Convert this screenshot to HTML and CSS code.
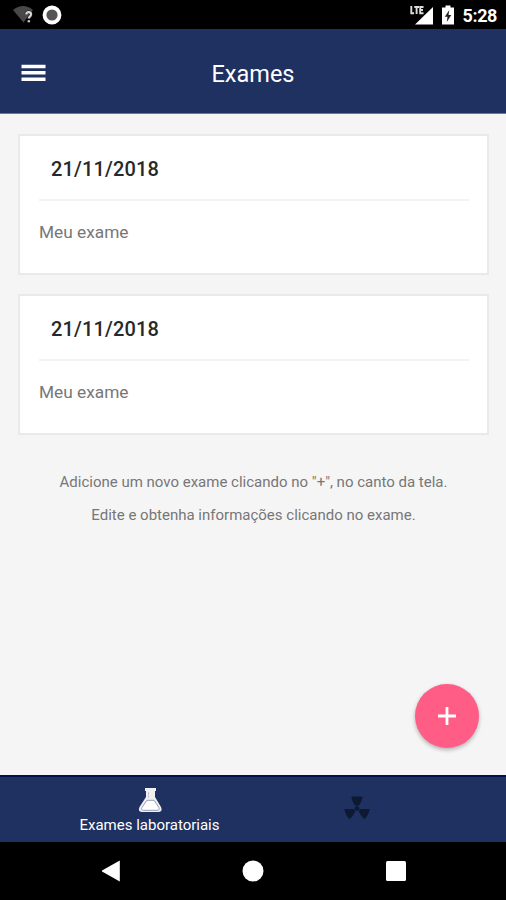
FILE: index.html
```html
<!DOCTYPE html>
<html lang="pt-BR">
  <head>
    <meta charset="UTF-8">
    <meta name="viewport" content="width=device-width, initial-scale=1.0">
    <title>Exames</title>
    <link rel="stylesheet" href="styles.css">
  </head>
  <body>
    <div class="status-bar">
      <div class="status-group">
        <svg class="wifi" width="22" height="20" viewBox="0 0 22 20">
          <path d="M0 5Q10 -3 20 5L10.500 17.500Z" fill="#484848" />
          <path d="M13.300 9.500Q13.300 7.200 15.600 7.200Q18 7.200 18 9.300Q18 10.700 16.800 11.700Q15.800 12.400 15.800 13.500M15.800 15.200V17.200" fill="none" stroke="#222" stroke-width="3.200" />
          <path d="M13.300 9.500Q13.300 7.200 15.600 7.200Q18 7.200 18 9.300Q18 10.700 16.800 11.700Q15.800 12.400 15.800 13.500M15.800 15.200V17.200" fill="none" stroke="#d5d5d5" stroke-width="2.200" />
        </svg>
        <svg width="20" height="20" viewBox="0 0 20 20">
          <circle cx="10" cy="10" r="7.500" fill="#555" stroke="#fff" stroke-width="3.800" />
        </svg>
      </div>
      <div class="status-group">
        <svg class="signal" width="24" height="20" viewBox="0 0 24 20">
          <path d="M23 2V19.500H5Z" fill="#fff" />
          <path d="M1.300 1V8.300H4M4.300 2H9M6.600 2V9M13.500 2H10.200V8.300H13.500M10.200 5H13" fill="none" stroke="#000" stroke-width="3" />
          <path d="M1.300 1V8.300H4M4.300 2H9M6.600 2V9M13.500 2H10.200V8.300H13.500M10.200 5H13" fill="none" stroke="#ddd" stroke-width="1.900" />
        </svg>
        <svg class="battery" width="12" height="20" viewBox="0 0 12 20">
          <path d="M3.500 0.500H8.500V2.500H12V19.500H0V2.500H3.500Z" fill="#fff" />
          <path d="M7.300 5L2.800 11.700H5.500L4.800 17L9.300 10H6.500Z" fill="#222" />
        </svg>
        <span class="clock">5:28</span>
      </div>
    </div>

    <header class="header">
      <button class="menu" aria-label="Menu">
        <svg width="25" height="18" viewBox="0 0 25 18">
          <path d="M0.500 2.500H24.500M0.500 8.800H24.500M0.500 15.200H24.500" stroke="#fff" stroke-width="3.400" />
        </svg>
      </button>
      <h1>Exames</h1>
    </header>

    <main class="content">
      <div class="card">
        <h2>21/11/2018</h2>
        <p>Meu exame</p>
      </div>
      <div class="card">
        <h2>21/11/2018</h2>
        <p>Meu exame</p>
      </div>
      <div class="hints">
        <p class="hint-add">Adicione um novo exame clicando no "+", no canto da tela.</p>
        <p class="hint-edit">Edite e obtenha informações clicando no exame.</p>
      </div>
      <button class="add" aria-label="Adicionar">
        <svg width="18" height="18" viewBox="0 0 18 18">
          <path d="M9 0V18M0 9H18" stroke="#fff" stroke-width="2.800" />
        </svg>
      </button>
    </main>

    <nav class="tabs">
      <div class="tab tab-lab">
        <svg width="24" height="26" viewBox="0 0 24 26">
          <path d="M7 1H18V4H17V10L23 20Q25 25 20.500 25H4Q-0.500 25 1.500 20L8 10V4H7Z" fill="#f0f0f2" />
          <path d="M8.800 13.300H16.200L20.800 20.500Q22 23.300 19 23.300H5.500Q2.700 23.300 4 20.500Z" fill="#fff" stroke="#8d93aa" stroke-width="0.900" />
          <path d="M10.500 5V11" stroke="#c5c8d3" stroke-width="1" />
        </svg>
        <span>Exames laboratoriais</span>
      </div>
      <div class="tab tab-image">
        <svg width="26" height="24" viewBox="0 0 26 24" fill="#0d1a31">
          <path d="M7.300 0.500H18.700Q18.200 5.500 14.800 9.700H11.200Q7.800 5.500 7.300 0.500Z" />
          <path d="M0.300 13H10.200L11.300 15.500Q9 20 5.700 23.300Q1.200 19 0.300 13Z" />
          <path d="M25.700 13H15.800L14.700 15.500Q17 20 20.300 23.300Q24.800 19 25.700 13Z" />
          <circle cx="13" cy="12.500" r="2.300" />
        </svg>
      </div>
    </nav>

    <div class="nav-bar">
      <svg width="18" height="22" viewBox="0 0 18 22">
        <path d="M17.800 0.500V21.500L0 11.500V10.500Z" fill="#fff" />
      </svg>
      <svg class="home" width="22" height="22" viewBox="0 0 22 22">
        <circle cx="11" cy="11" r="10.500" fill="#fff" />
      </svg>
      <svg class="recent" width="20" height="20" viewBox="0 0 20 20">
        <rect width="20" height="20" rx="1.500" fill="#fff" />
      </svg>
    </div>
  </body>
</html>
```
FILE: styles.css
```css
* {
  box-sizing: border-box;
}

body {
  margin: 0;
  height: 900px;
  display: flex;
  flex-direction: column;
  overflow: hidden;
  font-family: Roboto, "Liberation Sans", sans-serif;
  background-color: #f5f5f5;
}

h1,
h2,
p {
  margin: 0;
}

svg {
  display: block;
}

button {
  padding: 0;
  border: none;
  cursor: pointer;
}

.status-bar {
  height: 29px;
  padding: 0 9px 0 13px;
  display: flex;
  justify-content: space-between;
  background-color: #000;
}

.status-group {
  display: flex;
  gap: 7px;
  padding-top: 5px;
}

.battery {
  margin-left: 1px;
}

.clock {
  margin-left: 2px;
  font-size: 18px;
  font-weight: 700;
  line-height: 22px;
  letter-spacing: -0.4px;
  color: #fff;
}

.header {
  height: 85px;
  padding: 0 21px;
  display: grid;
  grid-template-columns: 25px 1fr 25px;
  align-items: center;
  background-color: #1f3161;
  border-bottom: 1px solid #6e7590;
}

.menu {
  width: 25px;
  padding-top: 3px;
  background: none;
}

.header h1 {
  padding-top: 5px;
  font-size: 23.5px;
  font-weight: 400;
  line-height: 28px;
  text-align: center;
  color: #fff;
}

.content {
  flex: 1;
  position: relative;
  padding: 20px 17px 0 18px;
}

.card {
  height: 141px;
  margin-bottom: 19px;
  padding: 0 18px 0 19px;
  border: 2px solid #e8eaea;
  background-color: #fff;
}

.card h2 {
  height: 65px;
  padding-left: 12px;
  border-bottom: 2px solid #f2f3f3;
  font-size: 20px;
  font-weight: 500;
  line-height: 66px;
  letter-spacing: 0.15px;
  color: #26282b;
}

.card p {
  padding-top: 19px;
  font-size: 17.3px;
  line-height: 24px;
  color: #777;
}

.hints {
  padding-top: 12px;
  font-size: 15px;
  line-height: 33px;
  text-align: center;
  color: #777;
}

.add {
  position: absolute;
  right: 27px;
  bottom: 27px;
  width: 64px;
  height: 64px;
  display: flex;
  align-items: center;
  justify-content: center;
  border-radius: 50%;
  background-color: #ff5c86;
  box-shadow: 0 2px 4px rgba(0, 0, 0, 0.28);
}

.tabs {
  height: 67px;
  padding: 0 46px;
  display: flex;
  background-color: #1f3161;
  border-top: 2px solid #03104a;
}

.tab {
  flex: 1;
  display: flex;
  flex-direction: column;
  align-items: center;
}

.tab-lab {
  padding-top: 10px;
  font-size: 15px;
  line-height: 24px;
  color: #fff;
}

.tab-image {
  padding-top: 19px;
}

.nav-bar {
  height: 58px;
  padding: 0 100px 0 102px;
  display: flex;
  align-items: center;
  justify-content: space-between;
  background-color: #000;
}
```
